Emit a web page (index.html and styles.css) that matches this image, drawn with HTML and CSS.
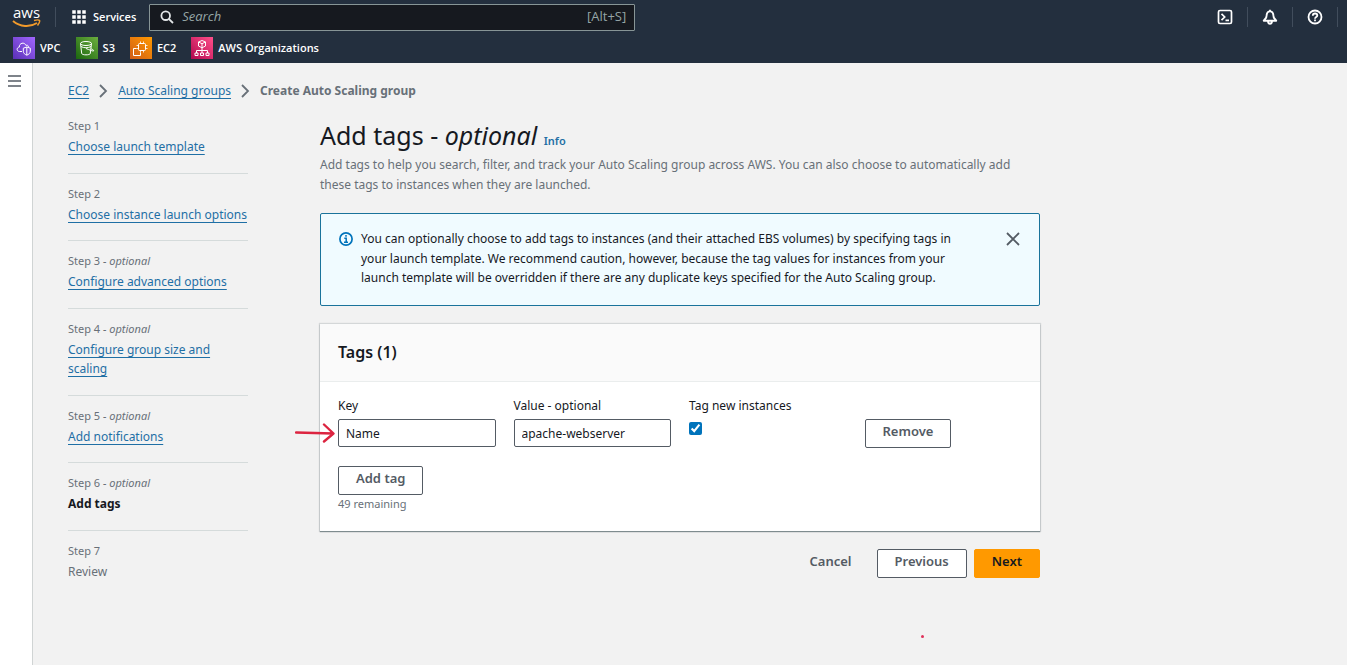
FILE: index.html
```html
<!DOCTYPE html>
<html lang="en">
<head>
<meta charset="utf-8">
<title>Create Auto Scaling group</title>
<link rel="stylesheet" href="styles.css">
</head>
<body>
<header class="topbar">
  <div class="topbar-main">
    <a class="logo" href="#" aria-label="AWS home">
      <span class="logo-text">aws</span>
      <svg class="logo-smile" width="29" height="9" viewBox="0 0 29 9" fill="none" stroke="#f19a2b" stroke-width="2"><path d="M1 2C8 8 18 8.500 25 4"/><path d="M22 1.500c3-.8 5-.8 5.500 0s-.5 3-2 5" stroke-width="1.500"/></svg>
    </a>
    <span class="divider"></span>
    <button class="services" type="button">
      <svg width="14" height="14" viewBox="0 0 14 14" fill="#fff"><path d="M0 0h4v4H0zM5 0h4v4H5zM10 0h4v4h-4zM0 5h4v4H0zM5 5h4v4H5zM10 5h4v4h-4zM0 10h4v4H0zM5 10h4v4H5zM10 10h4v4h-4z" stroke="#232f3e" stroke-width=".5"/></svg>
      Services
    </button>
    <label class="search">
      <svg width="14" height="14" viewBox="0 0 14 14" fill="none" stroke="#e3e6e8" stroke-width="1.800"><circle cx="5.700" cy="5.700" r="4.300"/><path d="M8.800 8.800 13 13"/></svg>
      <input class="search-input" type="search" placeholder="Search" aria-label="Search">
      <span class="shortcut">[Alt+S]</span>
    </label>
    <div class="tools">
      <button class="tool" type="button" aria-label="CloudShell"><svg width="16" height="16" viewBox="0 0 16 16" fill="none" stroke="#fff" stroke-width="1.700"><rect x="1.500" y="1.500" width="13" height="13" rx="1.500"/><path d="M4.500 4.800 7.700 8l-3.200 3.200M8.500 11.300H12"/></svg></button>
      <button class="tool" type="button" aria-label="Notifications"><svg width="16" height="16" viewBox="0 0 16 16" fill="none" stroke="#fff" stroke-width="1.900" stroke-linejoin="round"><path d="M8 .8v1.400M8 2.400c-2.300 0-3.200 1.700-3.400 4L4.200 8.600 1.800 11.700h12.400L11.800 8.600 11.400 6.400c-.2-2.300-1.100-4-3.400-4zM6 12c0 3.600 4 3.600 4 0"/></svg></button>
      <button class="tool" type="button" aria-label="Help"><svg width="16" height="16" viewBox="0 0 16 16" fill="none" stroke="#fff" stroke-width="1.800"><circle cx="8" cy="8" r="6.500"/><path d="M5.800 6.700c0-3 4.500-2.800 4.500-.2C10.300 8 8 8 8 9.700M8 10.600v1.700"/></svg></button>
    </div>
  </div>
  <nav class="favorites" aria-label="Favorites">
    <a class="favorite" href="#"><svg class="tile" width="22" height="22" viewBox="0 0 22 22" fill="none" stroke="#fff"><defs><linearGradient id="vpc" x1="0" y1="1" x2="1" y2="0"><stop stop-color="#5a30b5"/><stop offset="1" stop-color="#a166ff"/></linearGradient></defs><path fill="url(#vpc)" stroke="none" d="M0 0h22v22H0z"/><path d="M9 14.500H6.500c-3 0-3.200-4-.2-4.400C6 6 11.500 4.500 13 8.500c1-.8 2.500 0 2.500 1.300"/><path d="M13.800 10 17.300 11.200v3c0 2-1.500 3.200-3.500 4-2-.8-3.500-2-3.500-4v-3zM13.800 10v8"/></svg>VPC</a>
    <a class="favorite" href="#"><svg class="tile" width="22" height="22" viewBox="0 0 22 22" fill="none" stroke="#fff"><defs><linearGradient id="s3" x1="0" y1="1" x2="1" y2="0"><stop stop-color="#1b660f"/><stop offset="1" stop-color="#6cae3e"/></linearGradient></defs><path fill="url(#s3)" stroke="none" d="M0 0h22v22H0z"/><ellipse cx="10" cy="6.500" rx="5.500" ry="2"/><path d="M4.500 6.500 5.700 16.500c.5 1.800 8.100 1.800 8.600 0L15.500 6.500M5 9.500c3 1.700 7 1.700 10 0M10 11.500c3 1.200 7.500 3.200 7.700 2.300s-2.500-2-2.500-2"/></svg>S3</a>
    <a class="favorite" href="#"><svg class="tile" width="22" height="22" viewBox="0 0 22 22" fill="none" stroke="#fff"><defs><linearGradient id="ec2" x1="0" y1="1" x2="1" y2="0"><stop stop-color="#d05c17"/><stop offset="1" stop-color="#f90"/></linearGradient></defs><path fill="url(#ec2)" stroke="none" d="M0 0h22v22H0z"/><rect x="8.500" y="6.500" width="7" height="7" rx="1"/><path d="M10.500 6.500v-2M13.500 6.500v-2M10.500 15.500v-2M13.500 15.500v-2M8.500 8.500h-2M8.500 11.500h-2M17.500 8.500h-2M17.500 11.500h-2" stroke-width=".8"/><path d="M6.500 11.500h-3v7h7v-3"/></svg>EC2</a>
    <a class="favorite" href="#"><svg class="tile" width="22" height="22" viewBox="0 0 22 22" fill="none" stroke="#fff"><defs><linearGradient id="org" x1="0" y1="1" x2="1" y2="0"><stop stop-color="#b0084d"/><stop offset="1" stop-color="#ff4f8b"/></linearGradient></defs><path fill="url(#org)" stroke="none" d="M0 0h22v22H0z"/><path d="m11 3.500 3.500 1.500v4L11 10.800 7.500 9V5zM7.500 5 11 6.700 14.500 5M11 6.700V16M5.500 16v-2.500h11V16"/><path d="M4 16h3v2.500H4zM9.500 16h3v2.500h-3zM15 16h3v2.500h-3z"/></svg>AWS Organizations</a>
  </nav>
</header>
<div class="shell">
  <aside class="rail">
    <button class="menu" type="button" aria-label="Open navigation"><svg width="14" height="12" viewBox="0 0 14 12" stroke="#545b64" stroke-width="1.600"><path d="M0 1h13M0 6h13M0 11h13"/></svg></button>
  </aside>
  <div class="content">
    <nav class="breadcrumb" aria-label="Breadcrumb">
      <a class="link" href="#">EC2</a>
      <svg width="9" height="14" viewBox="0 0 9 14" fill="none" stroke="#687078" stroke-width="1.800"><path d="m1 1 6 6-6 6"/></svg>
      <a class="link" href="#">Auto Scaling groups</a>
      <svg width="9" height="14" viewBox="0 0 9 14" fill="none" stroke="#687078" stroke-width="1.800"><path d="m1 1 6 6-6 6"/></svg>
      <span class="current">Create Auto Scaling group</span>
    </nav>
    <div class="wizard">
      <ol class="steps">
        <li class="step"><span class="step-label">Step 1</span><a class="link" href="#">Choose launch template</a></li>
        <li class="step"><span class="step-label">Step 2</span><a class="link" href="#">Choose instance launch options</a></li>
        <li class="step"><span class="step-label">Step 3 <i>- optional</i></span><a class="link" href="#">Configure advanced options</a></li>
        <li class="step"><span class="step-label">Step 4 <i>- optional</i></span><a class="link" href="#">Configure group size and<br>scaling</a></li>
        <li class="step"><span class="step-label">Step 5 <i>- optional</i></span><a class="link" href="#">Add notifications</a></li>
        <li class="step"><span class="step-label">Step 6 <i>- optional</i></span><b class="step-active">Add tags</b></li>
        <li class="step"><span class="step-label">Step 7</span><span class="step-next">Review</span></li>
      </ol>
      <main class="form">
        <h1 class="title">Add tags - <i>optional</i> <a class="info" href="#">Info</a></h1>
        <p class="description">Add tags to help you search, filter, and track your Auto Scaling group across AWS. You can also choose to automatically add these tags to instances when they are launched.</p>
        <section class="alert">
          <svg class="alert-icon" width="14" height="14" viewBox="0 0 14 14" fill="none" stroke="#0073bb" stroke-width="1.700"><circle cx="7" cy="7" r="6.100"/><path d="M7 3v1.700M5.300 6.300H7.200v4M5 10.300h4" stroke-width="1.500"/></svg>
          <p class="alert-text">You can optionally choose to add tags to instances (and their attached EBS volumes) by specifying tags in your launch template. We recommend caution, however, because the tag values for instances from your launch template will be overridden if there are any duplicate keys specified for the Auto Scaling group.</p>
          <button class="close" type="button" aria-label="Dismiss"><svg width="14" height="14" viewBox="0 0 14 14" stroke="#545b64" stroke-width="1.800"><path d="m1 1 12 12M13 1 1 13"/></svg></button>
        </section>
        <section class="card">
          <h2 class="card-title">Tags (1)</h2>
          <div class="card-body">
            <div class="tag-row">
              <div class="field"><label for="key">Key</label><input class="text" id="key" value="Name">
                <svg class="pointer" width="40" height="20" viewBox="0 0 40 20" fill="none" stroke="#dc2440" stroke-width="2.400" stroke-linecap="round" stroke-linejoin="round"><path d="m1 9.500 37 1M29 1.500l9.500 9-9.500 8"/></svg>
              </div>
              <div class="field"><label for="value">Value - optional</label><input class="text" id="value" value="apache-webserver"></div>
              <div class="field"><label for="propagate">Tag new instances</label><input class="check" id="propagate" type="checkbox" checked></div>
              <div class="field field-action"><button class="button" type="button">Remove</button></div>
            </div>
            <button class="button" type="button">Add tag</button>
            <p class="remaining">49 remaining</p>
          </div>
        </section>
        <div class="actions">
          <button class="button button-link" type="button">Cancel</button>
          <button class="button" type="button">Previous</button>
          <button class="button button-primary" type="button">Next</button>
          <span class="dot"></span>
        </div>
      </main>
    </div>
  </div>
</div>
</body>
</html>
```
FILE: styles.css
```css
* { box-sizing: border-box; }
body {
  margin: 0;
  min-height: 100vh;
  display: flex;
  flex-direction: column;
  background: #f2f2f2;
  color: #16191f;
  font: 12px/1.625 "Noto Sans", "Open Sans", sans-serif;
}
h1, h2, p, ol { margin: 0; padding: 0; }
svg { display: block; flex: none; }
button, input { font: inherit; color: inherit; }
button { background: none; border: 0; padding: 0; }

.topbar {
  background: #232f3e;
  color: #fff;
  height: 63px;
  font-family: "Open Sans", "Noto Sans", sans-serif;
  font-size: 11px;
  font-weight: 600;
}
.topbar-main { display: flex; align-items: center; height: 34px; padding: 0 9px 0 12px; }
.logo { display: block; width: 29px; color: #fff; text-decoration: none; }
.logo-text { display: block; font-size: 15px; line-height: 12px; font-weight: 500; text-align: center; }
.logo-smile { margin-top: 1px; }
.divider { width: 1px; height: 20px; margin: 0 16px 0 14px; background: #414d5c; }
.services { display: flex; align-items: center; gap: 7px; }
.search {
  display: flex;
  align-items: center;
  gap: 8px;
  flex: 0 1 486px;
  height: 27px;
  margin: 0 0 0 13px;
  padding: 0 8px 0 10px;
  border: 1px solid #879596;
  border-radius: 1px;
  background: #16191f;
  font-weight: 400;
  font-size: 13px;
}
.search-input { flex: 1; min-width: 0; padding: 0; border: 0; outline: 0; background: none; }
.search-input::placeholder { color: #95a5a6; font-style: italic; opacity: 1; }
.shortcut { color: #95a5a6; }
.tools { display: flex; margin-left: auto; }
.tool { padding: 2px 14px; border-right: 1px solid #414d5c; }
.favorites { display: flex; gap: 15px; padding: 3px 13px 0; }
.favorite { display: flex; align-items: center; gap: 5px; color: #fff; text-decoration: none; }

.shell { display: flex; flex: 1; }
.rail { width: 33px; flex: none; background: #fff; border-right: 1px solid #d0d4d4; }
.menu { display: block; padding: 12px 8px; }
.content { flex: 1; padding: 18px 36px 36px 35px; }
.link { color: #1f6fa5; text-decoration: underline; text-underline-offset: 3px; }
.breadcrumb { display: flex; align-items: center; gap: 10px; height: 20px; }
.current { color: #687078; font-weight: 700; }
.wizard {
  display: grid;
  grid-template-columns: 180px minmax(0, 720px);
  column-gap: 72px;
  padding-top: 16px;
}
.steps { list-style: none; }
.step { padding: 11px 0 16px; border-bottom: 1px solid #d5dbdb; }
.step:first-child { padding-top: 0; }
.step:last-child { border: 0; }
.step-label { display: block; margin-bottom: 2px; color: #687078; font-size: 11px; line-height: 18px; }
.step .link, .step-active, .step-next { display: block; }
.step-active { font-weight: 700; }
.step-next { color: #687078; }

.title { font-size: 25px; line-height: 36px; font-weight: 400; }
.info { color: #1f6fa5; font-size: 11px; line-height: 1; font-weight: 600; text-decoration: none; }
.description { margin-top: 2px; color: #687078; }
.alert {
  display: flex;
  gap: 8px;
  margin-top: 19px;
  padding: 15px 19px 17px 18px;
  border: 1px solid #1a739b;
  border-radius: 2px;
  background: #f0fbff;
}
.alert-icon { margin-top: 3px; }
.alert-text { flex: 0 1 610px; }
.close { align-self: flex-start; margin: 3px 0 0 auto; }
.card {
  margin-top: 18px;
  background: #fff;
  box-shadow: 0 1px 1px rgba(0, 28, 36, .4), 0 0 1px 1px rgba(0, 28, 36, .12);
}
.card-title {
  padding: 16px 18px 17px;
  border-bottom: 1px solid #eaeded;
  background: #fafafa;
  font-size: 16px;
  line-height: 24px;
  font-weight: 600;
}
.card-body { padding: 14px 18px 18px; }
.tag-row { display: grid; grid-template-columns: repeat(4, 1fr); gap: 18px; margin-bottom: 18px; }
.field { position: relative; display: flex; flex-direction: column; align-items: flex-start; gap: 4px; }
.field-action { justify-content: flex-end; }
.text { width: 100%; height: 28px; margin: 0 0 1px; padding: 0 7px; border: 1px solid #545b64; border-radius: 2px; background: #fff; }
.check { width: 13px; height: 13px; margin: 3px 0; accent-color: #0073bb; }
.button {
  height: 29px;
  padding: 0 17px 3px;
  border: 1px solid #545b64;
  border-radius: 2px;
  background: #fff;
  color: #545b64;
  font-size: 13px;
  font-weight: 600;
}
.button-link { border-color: transparent; background: none; }
.button-primary { border-color: #f90; background: #f90; color: #16191f; }
.remaining { color: #687078; font-size: 11px; line-height: 18px; }
.actions { position: relative; display: flex; justify-content: flex-end; gap: 7px; margin-top: 18px; }

/* Hand-drawn annotations lying over the page */
.pointer { position: absolute; right: calc(100% + 3px); bottom: 5px; }
.dot { position: absolute; right: 116px; top: 86px; width: 3px; height: 3px; border-radius: 50%; background: #e0315a; }
```
